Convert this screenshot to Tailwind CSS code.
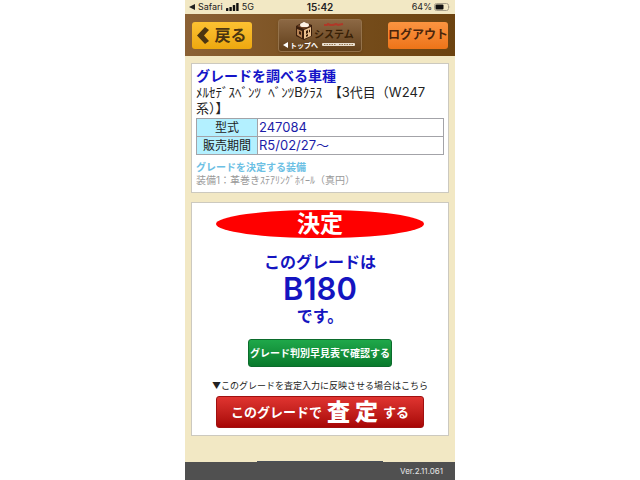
<!DOCTYPE html>
<html lang="ja">
  <head>
    <meta charset="UTF-8" />
    <meta name="viewport" content="width=device-width, initial-scale=1.0" />
    <title>グレード判別</title>
    <script src="https://cdn.jsdelivr.net/npm/@tailwindcss/browser@4"></script>
  </head>
  <body class="bg-white font-['Inter','Noto_Sans_CJK_JP',sans-serif] text-[#222]">
    <div class="mx-auto flex min-h-screen w-full max-w-[270px] flex-col bg-[#f2e8c4]">
      <!-- status bar -->
      <div class="grid h-[14px] grid-cols-3 items-center pr-1 pl-1 text-[9px] leading-[14px]">
        <div class="flex items-center gap-[3px]">
          <svg class="h-[6px] w-[6px]" viewBox="0 0 6 6"><path d="M6 0v6L0 3z" fill="#222" /></svg>
          <span>Safari</span>
          <svg class="h-[8px] w-[13px]" viewBox="0 0 13 8" fill="#111">
            <rect x="0" y="5" width="2.4" height="3" rx=".5" />
            <rect x="3.4" y="4" width="2.4" height="4" rx=".5" />
            <rect x="6.8" y="2" width="2.4" height="6" rx=".5" />
            <rect x="10.2" y="0" width="2.4" height="8" rx=".5" />
          </svg>
          <span>5G</span>
        </div>
        <div class="text-center text-[10px] font-semibold">15:42</div>
        <div class="flex items-center justify-end gap-[2px]">
          <span>64%</span>
          <svg class="h-[8px] w-[17px]" viewBox="0 0 17 8">
            <rect x=".5" y=".5" width="14" height="7" rx="2" fill="none" stroke="#a8a08a" />
            <rect x="1.5" y="1.5" width="8" height="5" rx="1" fill="#111" />
            <path d="M15.6 2.8q1 1.2 0 2.4z" fill="#a8a08a" />
          </svg>
        </div>
      </div>

      <!-- header -->
      <header class="flex h-[42px] items-center justify-between bg-linear-to-r from-[#8b6135] via-[#79501f] to-[#6c4310] pr-[7px] pl-[7px]">
        <button class="flex h-[27px] w-[60px] items-center justify-center gap-[5px] rounded-[3px] bg-linear-to-b from-[#fcc131] to-[#eda80d] text-[16px] leading-none font-bold text-[#4b3511]">
          <svg class="h-[17px] w-[12px]" viewBox="0 0 12 17"><path d="M8 0l4 3-5 5.500 5 5.500-4 3-8-8.500z" fill="#4b3511" /></svg>
          戻る
        </button>
        <a href="#" class="flex h-[33px] w-[84px] items-center justify-center rounded-[3px] border border-[#94724b] bg-linear-to-b from-[#8c6844] to-[#62401a] shadow">
          <svg class="h-[31px] w-[80px]" viewBox="0 0 80 31" font-family="Noto Sans CJK JP, sans-serif" font-weight="bold">
            <path d="M16 6l7-4 9 3v11l-8 4-8-4z" fill="#3a1e0c" />
            <path d="M17 6l6-3 8 3-7 3z" fill="#6f4326" />
            <path d="M20 5q0-2 2-2 2-2 4 0 3 0 3 2 0 2-3 2h-4q-2 0-2-2z" fill="#fff3e6" />
            <path d="M24 10l7-3v9l-7 3z" fill="#eabf8e" />
            <path d="M17 9l5 2v7l-5-3z" fill="#b78355" />
            <path d="M26 11l2-1v3l-2 1zM29 10l1-.5v2.500l-1 .5zM26 15l2-1v2l-2 1zM19 11l2 1v3l-2-1z" fill="#3a1e0c" />
            <path d="M44 5h3l1-1 2 1h3l3-1 2 1 5-1" fill="none" stroke="#b03828" stroke-width="2" />
            <text x="34" y="18" font-size="10" fill="#382006">システム</text>
            <path d="M8 22v6l-5-3z" fill="#fff" />
            <text x="10" y="28" font-size="7" fill="#fff">トップへ</text>
            <rect x="42" y="23" width="33" height="3" rx="1" fill="#e9dfd0" />
            <path d="M44 24.500h12M59 24.500h14" stroke="#94764f" stroke-dasharray="1.500 1" />
          </svg>
        </a>
        <button class="h-[27px] w-[60px] rounded-[3px] bg-linear-to-b from-[#fb9440] to-[#ed7417] text-[12px] leading-none font-bold whitespace-nowrap text-[#4b250b]">ログアウト</button>
      </header>

      <main class="flex flex-col gap-[9px] px-[6px] pt-[7px] pb-[25px]">
        <!-- vehicle -->
        <section class="border border-[#ccc9bf] bg-white px-1 pt-1 pb-[5px]">
          <h1 class="text-[14px] leading-4 font-bold text-[#1414c8]">グレードを調べる車種</h1>
          <p class="text-[13px] leading-4">ﾒﾙｾﾃﾞｽﾍﾞﾝﾂ&nbsp; ﾍﾞﾝﾂBｸﾗｽ　【3代目（W247系）】</p>
          <table class="mt-[2px] w-full border-collapse text-[13px] leading-[17px]">
            <tr>
              <th class="w-[61px] border border-[#a3a3a8] bg-[#b3f0ff] p-0 text-[12px] font-normal">型式</th>
              <td class="border border-[#a3a3a8] px-px py-0 text-[#1c1ca8]">247084</td>
            </tr>
            <tr>
              <th class="w-[61px] border border-[#a3a3a8] bg-[#b3f0ff] p-0 text-[12px] font-normal">販売期間</th>
              <td class="border border-[#a3a3a8] px-px py-0 text-[#1c1ca8]">R5/02/27～</td>
            </tr>
          </table>
          <h2 class="mt-[6px] text-[10px] leading-3 font-bold text-[#6cc0e4]">グレードを決定する装備</h2>
          <p class="text-[10px] leading-[14px] text-[#999]">装備1：革巻きｽﾃｱﾘﾝｸﾞﾎｲｰﾙ（真円）</p>
        </section>

        <!-- result -->
        <section class="flex flex-col items-center border border-[#ccc9bf] bg-white px-6 pt-[7px] pb-[7px]">
          <h2 class="h-[28px] w-full rounded-[50%] bg-[#f00] text-center text-[23px] leading-[28px] font-bold text-white">決定</h2>
          <div class="mt-[14px] text-center text-[16px] leading-5 font-bold text-[#1414c0]">
            <p>このグレードは</p>
            <p class="text-[31px] leading-[34px] font-semibold">B180</p>
            <p>です。</p>
          </div>
          <button class="mt-[13px] h-[28px] w-[144px] rounded-[3px] border border-[#0b6b2c] bg-linear-to-b from-[#1fa84a] to-[#087a2c] text-[10px] leading-none font-bold whitespace-nowrap text-white">グレード判別早見表で確認する</button>
          <p class="mt-3 text-[9px] leading-[14px] whitespace-nowrap">▼このグレードを査定入力に反映させる場合はこちら</p>
          <button class="mt-[3px] flex h-[32px] w-full items-center justify-center gap-[5px] rounded-[3px] border border-[#a01010] bg-linear-to-b from-[#e03430] to-[#a80505] text-[13px] leading-none font-bold whitespace-nowrap text-white">
            <span>このグレードで</span>
            <span class="text-[23px] font-black">査</span>
            <span class="text-[23px] font-black">定</span>
            <span>する</span>
          </button>
        </section>
      </main>

      <!-- home indicator sits on the footer's top edge -->
      <div class="mx-auto mt-auto h-px w-[126px] bg-[#4a5058]"></div>
      <footer class="flex h-[18px] items-center justify-end bg-[#505050] pr-3 text-[8px] text-[#e6e6e6]">Ver.2.11.061</footer>
    </div>
  </body>
</html>
